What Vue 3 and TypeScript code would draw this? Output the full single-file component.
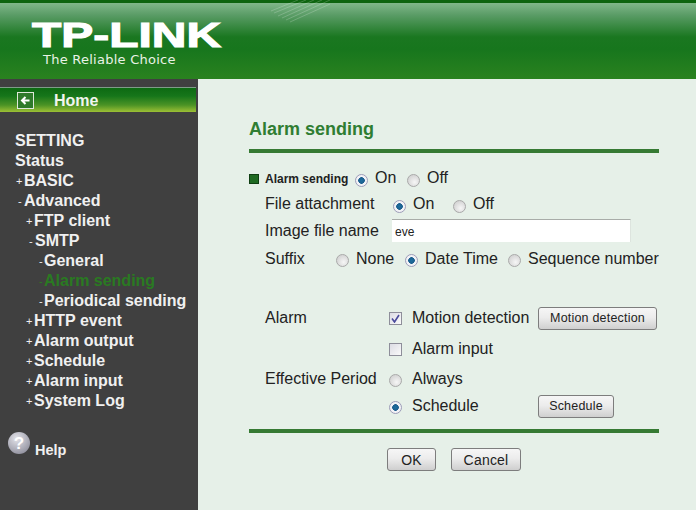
<template>
  <div class="app">
    <header class="top">
      <svg class="hatch" width="60" height="24" viewBox="0 0 60 24" aria-hidden="true">
        <path d="M44 0 L8 16 M52 0 L12 18 M60 0 L16 20 M60 4 L20 22 M36 0 L4 13 M28 0 L1 11" stroke="#ffffff" stroke-opacity=".2" stroke-width="1" fill="none" />
      </svg>
      <div class="logo">
        <div class="logo-name">TP-LINK</div>
        <div class="logo-tag">The Reliable Choice</div>
      </div>
    </header>

    <div class="body">
      <aside class="side">
        <div class="home">
          <svg class="home-icon" width="17" height="17" viewBox="0 0 17 17" aria-hidden="true">
            <rect x=".5" y=".5" width="16" height="16" fill="#2f7a2a" stroke="#dfe8da" />
            <path d="M12.5 8.5H5.5M8.5 5L5 8.5L8.5 12" stroke="#fff" stroke-width="2" fill="none" />
          </svg>
          <span>Home</span>
        </div>

        <nav class="tree">
          <div v-for="item in menu" :key="item.label" class="tree-row" :class="item.cls">
            <span v-if="item.mark" class="mark">{{ item.mark }}</span>{{ item.label }}
          </div>
        </nav>

        <div class="help">
          <svg width="24" height="24" viewBox="0 0 24 24" aria-hidden="true">
            <defs>
              <radialGradient id="ball" cx=".4" cy=".3" r=".8">
                <stop offset="0" stop-color="#e4e4ea" />
                <stop offset="1" stop-color="#8b8b99" />
              </radialGradient>
            </defs>
            <circle cx="12" cy="12" r="11" fill="url(#ball)" />
            <text x="12" y="18" text-anchor="middle" class="help-q">?</text>
          </svg>
          <span>Help</span>
        </div>
      </aside>

      <main class="main">
        <h1 class="title">Alarm sending</h1>
        <div class="rule" />

        <div class="row r-first">
          <span class="bullet" />
          <b class="small-label">Alarm sending</b>
          <span class="radio on" />
          <span class="opt w-on raised">On</span>
          <span class="radio" />
          <span class="opt raised">Off</span>
        </div>
        <div class="row indent">
          <span class="lab w-file raised">File attachment</span>
          <span class="radio on" />
          <span class="opt w-on2 raised">On</span>
          <span class="radio" />
          <span class="opt raised">Off</span>
        </div>
        <div class="row indent">
          <span class="lab w-col">Image file name</span>
          <div class="field">eve</div>
        </div>
        <div class="row indent suffix">
          <span class="lab w-suffix">Suffix</span>
          <span class="radio" />
          <span class="opt w-none">None</span>
          <span class="radio on" />
          <span class="opt w-date">Date Time</span>
          <span class="radio" />
          <span class="opt">Sequence number</span>
        </div>

        <div class="row indent r-alarm">
          <span class="lab w-col2">Alarm</span>
          <span class="check on">
            <svg width="9" height="9" viewBox="0 0 9 9" aria-hidden="true">
              <path d="M1 4.5L3.5 8L8 1" stroke="#4a4a9c" stroke-width="1.6" fill="none" />
            </svg>
          </span>
          <span class="opt w-motion">Motion detection</span>
          <button class="btn btn-motion" type="button">Motion detection</button>
        </div>
        <div class="row indent r-input">
          <span class="lab w-col2" />
          <span class="check" />
          <span class="opt">Alarm input</span>
        </div>
        <div class="row indent r-period">
          <span class="lab w-col2">Effective Period</span>
          <span class="radio big" />
          <span class="opt">Always</span>
        </div>
        <div class="row indent r-sched">
          <span class="lab w-col2" />
          <span class="radio big on" />
          <span class="opt w-motion">Schedule</span>
          <button class="btn btn-sched" type="button">Schedule</button>
        </div>

        <div class="rule rule-low" />
        <div class="actions">
          <button class="btn btn-ok" type="button">OK</button>
          <button class="btn btn-cancel" type="button">Cancel</button>
        </div>
      </main>
    </div>
  </div>
</template>

<script setup lang="ts">
interface MenuItem {
  label: string;
  mark?: string;
  cls: string;
}

const menu: MenuItem[] = [
  { label: 'SETTING', cls: 'lv0' },
  { label: 'Status', cls: 'lv0' },
  { label: 'BASIC', mark: '+', cls: 'lv1' },
  { label: 'Advanced', mark: '-', cls: 'lv1b' },
  { label: 'FTP client', mark: '+', cls: 'lv2' },
  { label: 'SMTP', mark: '-', cls: 'lv2b' },
  { label: 'General', mark: '-', cls: 'lv3' },
  { label: 'Alarm sending', mark: '-', cls: 'lv3 active' },
  { label: 'Periodical sending', mark: '-', cls: 'lv3' },
  { label: 'HTTP event', mark: '+', cls: 'lv2' },
  { label: 'Alarm output', mark: '+', cls: 'lv2' },
  { label: 'Schedule', mark: '+', cls: 'lv2' },
  { label: 'Alarm input', mark: '+', cls: 'lv2' },
  { label: 'System Log', mark: '+', cls: 'lv2' },
];
</script>

<style>
html,
body {
  margin: 0;
  background: #e6f0e8;
}
</style>

<style scoped>
.app {
  width: 696px;
  height: 510px;
  display: flex;
  flex-direction: column;
  overflow: hidden;
  font-family: "Liberation Sans", Arial, sans-serif;
  color: #222;
}

.top {
  position: relative;
  height: 76px;
  flex: none;
  border-top: 3px solid #0d640f;
  background: linear-gradient(180deg, #80b78a 0, #5a9c66 12px, #1a7720 34px, #17761d 46px, #2a821f 76px);
}

.hatch {
  position: absolute;
  left: 270px;
  top: -3px;
}

.logo {
  padding: 19px 0 0 32px;
  color: #fff;
}

.logo-name {
  width: 138px;
  height: 26px;
  font-size: 35px;
  line-height: 26px;
  font-weight: 700;
  white-space: nowrap;
  transform: scaleX(1.37);
  transform-origin: 0 50%;
  -webkit-text-stroke: 1.1px #fff;
}

.logo-tag {
  margin: 4px 0 0 11px;
  font-family: "DejaVu Sans", sans-serif;
  font-size: 13px;
  letter-spacing: 0.25px;
  line-height: 15px;
  color: #e9f3e6;
}

.body {
  flex: 1;
  display: flex;
  min-height: 0;
}

.side {
  width: 198px;
  flex: none;
  background: #404040;
  padding-top: 8px;
  box-sizing: border-box;
}

.home {
  width: 196px;
  height: 25px;
  box-sizing: border-box;
  display: flex;
  align-items: center;
  padding-left: 17px;
  gap: 20px;
  border-top: 1px solid #7f9c88;
  background: linear-gradient(180deg, #0d6a12 0, #16761a 8px, #4b9325 17px, #a9c637 25px);
  color: #f1f5ee;
  font-size: 16px;
  font-weight: 700;
}

.home span {
  padding-top: 2px;
}

.tree {
  padding-top: 19px;
}

.tree-row {
  height: 20px;
  line-height: 20px;
  font-size: 16px;
  font-weight: 700;
  color: #f0f0f0;
  white-space: nowrap;
}

.mark {
  font-weight: 400;
  font-size: 11px;
  display: inline-block;
  width: 8px;
  vertical-align: 1px;
}

.lv0 {
  padding-left: 15px;
}

.lv1 {
  padding-left: 16px;
}

.lv1b {
  padding-left: 18px;
}

.lv1b .mark {
  width: 6px;
}

.lv2 {
  padding-left: 26px;
}

.lv2b {
  padding-left: 29px;
}

.lv2b .mark {
  width: 6px;
}

.lv3 {
  padding-left: 39px;
}

.lv3 .mark {
  width: 5px;
}

.active {
  color: #2a7a22;
}

.help {
  display: flex;
  align-items: flex-start;
  padding: 20px 0 0 7px;
  gap: 4px;
  color: #f0f0f0;
  font-size: 14.5px;
  font-weight: 700;
}

.help span {
  padding-top: 11px;
}

.help-q {
  font-family: "Liberation Sans", sans-serif;
  font-size: 17px;
  font-weight: 700;
  fill: #fff;
}

.main {
  flex: 1;
  min-width: 0;
  background: #e6f0e8;
  padding: 38px 37px 0 51px;
  box-sizing: border-box;
}

.title {
  margin: 0;
  height: 24px;
  line-height: 24px;
  font-size: 18px;
  font-weight: 700;
  color: #2f7d32;
}

.rule {
  height: 4px;
  margin-top: 8px;
  background: #367a33;
}

.row {
  display: flex;
  align-items: center;
  height: 26px;
  font-size: 16px;
  white-space: nowrap;
}

.r-first {
  margin-top: 13px;
}

.raised {
  margin-top: -2px;
}

.indent {
  padding-left: 16px;
}

.suffix {
  height: 28px;
  margin-top: 1px;
}

.r-alarm {
  height: 28px;
  margin-top: 31px;
}

.r-input {
  height: 28px;
  margin-top: 3px;
}

.r-period {
  margin-top: 3px;
}

.r-sched {
  height: 28px;
  margin-top: 0;
}

.bullet {
  width: 10px;
  height: 10px;
  box-sizing: border-box;
  background: #1f6a22;
  border: 1px solid #0f3f12;
  margin-right: 6px;
}

.small-label {
  font-size: 12px;
  width: 90px;
}

.lab {
  display: block;
}

.w-file {
  width: 128px;
}

.w-col {
  width: 127px;
}

.w-suffix {
  width: 71px;
}

.w-col2 {
  width: 124px;
}

.w-on {
  width: 32px;
}

.w-on2 {
  width: 40px;
}

.w-none {
  width: 49px;
}

.w-date {
  width: 83px;
}

.w-motion {
  width: 126px;
}

.radio {
  width: 13px;
  height: 13px;
  flex: none;
  box-sizing: border-box;
  border: 1px solid #a9a9a9;
  border-radius: 50%;
  background: radial-gradient(circle at 60% 65%, #f6f6f6 0, #d6d6d6 70%);
  margin: 2px 7px 0 0;
}

.radio.on {
  border-color: #9d9db8;
  background: radial-gradient(circle, #1c6fa0 0, #1c5f8e 3px, #f2f2f6 3.6px);
}

.radio.big {
  margin: 3px 10px 0 0;
}

.check {
  width: 13px;
  height: 13px;
  flex: none;
  box-sizing: border-box;
  border: 1px solid #8e8e9a;
  background: linear-gradient(135deg, #dcdce4, #fafafa);
  margin-right: 10px;
  display: flex;
  align-items: center;
  justify-content: center;
}

.field {
  width: 239px;
  height: 23px;
  box-sizing: border-box;
  margin-top: -2px;
  border-top: 1px solid #a8aca8;
  border-right: 1px solid #dde4de;
  background: #fff;
  padding: 5px 0 0 3px;
  font-size: 12px;
  line-height: 14px;
  color: #222;
}

.btn {
  height: 23px;
  padding: 0;
  box-sizing: border-box;
  border: 1px solid #7d7d7d;
  border-radius: 3px;
  background: linear-gradient(180deg, #f6f6f6 0, #ececec 45%, #cfcfcf 100%);
  font-family: "Liberation Sans", Arial, sans-serif;
  font-size: 12.5px;
  letter-spacing: 0.2px;
  color: #222;
}

.btn-motion {
  width: 119px;
  flex: none;
}

.btn-sched {
  width: 76px;
  flex: none;
}

.rule-low {
  margin-top: 9px;
}

.actions {
  display: flex;
  gap: 15px;
  padding: 15px 0 0 138px;
}

.btn-ok {
  width: 49px;
  font-size: 14px;
}

.btn-cancel {
  width: 70px;
  font-size: 14px;
}
</style>
